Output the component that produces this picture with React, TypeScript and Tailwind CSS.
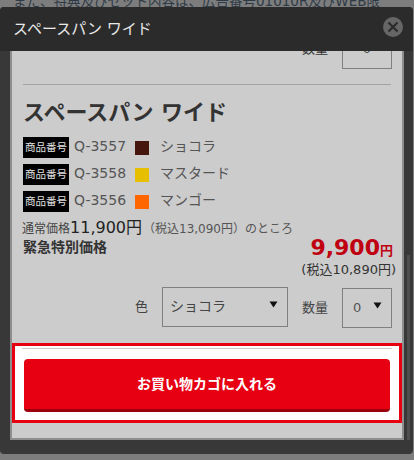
import React from 'react';

const font = { fontFamily: '"DejaVu Sans", "Noto Sans CJK JP", sans-serif' };

const items = [
  { code: 'Q-3557', color: 'bg-[#45150e]', name: 'ショコラ' },
  { code: 'Q-3558', color: 'bg-[#e6bf00]', name: 'マスタード' },
  { code: 'Q-3556', color: 'bg-[#ff6600]', name: 'マンゴー' },
];

const Arrow = () => (
  <svg width="9" height="7" viewBox="0 0 9 7" className="block">
    <path d="M0.5 0.5h8L4.5 6.5z" fill="#111" />
  </svg>
);

export default function App() {
  return (
    <div style={font} className="relative h-[460px] w-[414px] overflow-hidden bg-[#7d7d7d]">
      <p className="h-[7px] overflow-hidden whitespace-nowrap pl-[13px] text-[13.5px] leading-[3px] text-[#2d3a45]">
        また、特典及びセット内容は、広告番号01010R及びWEB限
      </p>

      {/* modal */}
      <div className="absolute left-0 top-[7px] flex h-[447px] w-[413px] flex-col rounded-[4px] bg-[#383838]">
        <div className="relative z-10 flex h-[44px] shrink-0 items-center justify-between rounded-t-[4px] bg-[#2b2b2b] pl-[13px] pr-[10px]">
          <h2 className="text-[15px] font-normal text-[#e8e8e8]">スペースパン ワイド</h2>
          <svg width="20" height="20" viewBox="0 0 20 20" className="mb-[4px]">
            <circle cx="10" cy="10" r="10" fill="#666" />
            <path d="M5.5 5.5l9 9M14.5 5.5l-9 9" stroke="#2b2b2b" strokeWidth="2.2" />
          </svg>
        </div>

        <div className="relative flex-1 overflow-hidden">
          <div className="absolute right-[3px] top-[204px] h-[185px] w-[3px] bg-[#4e4e4e]" />
          <div className="ml-[10px] mt-[-24px] h-[413px] w-[394px] border-2 border-[#8e8e8e] bg-[#cccccc]">
            <div className="flex justify-end pr-[10px]">
              <span className="mr-[14px] mt-[10px] text-[13px] leading-[20px] text-[#333]">数量</span>
              <div className="flex h-[40px] w-[50px] justify-center border border-[#808080] pt-[9px] text-[13px] leading-[20px] text-[#444]">0</div>
            </div>

            <div className="mx-[11px] mt-[15px] border-t border-[#a3a3a3]" />

            <h1 className="ml-[11px] mt-[11px] text-[22px] font-bold leading-[34px] text-[#333]">スペースパン ワイド</h1>

            <div className="ml-[11px] mt-[7px] flex flex-col gap-[6px]">
              {items.map((item) => (
                <div key={item.code} className="flex h-[21px] items-center">
                  <span className="flex h-[21px] w-[46px] items-center justify-center bg-black text-[10.5px] text-[#e0e0e0]">商品番号</span>
                  <span className="mb-[3px] ml-[5px] w-[61px] text-[14px] text-[#555]">{item.code}</span>
                  <span className={`h-[14px] w-[14px] ${item.color}`} />
                  <span className="mb-[3px] ml-[11px] text-[14px] text-[#555]">{item.name}</span>
                </div>
              ))}
            </div>

            <p className="ml-[10px] mt-[4px] flex h-[24px] items-baseline leading-[24px] text-[#444]">
              <span className="text-[12px]">通常価格</span>
              <span className="text-[16px] text-[#222]">11,900円</span>
              <span className="ml-[1px] text-[12px] text-[#555]">（税込13,090円）のところ</span>
            </p>

            <div className="mt-[-3px] flex h-[27px] justify-between pl-[11px] pr-[9px]">
              <span className="h-[20px] text-[14px] font-bold leading-[20px] text-[#333]">緊急特別価格</span>
              <span className="mt-[-5px] h-[32px] text-[22px] font-bold leading-[32px] text-[#c00010]">
                9,900<span className="text-[13px]">円</span>
              </span>
            </div>
            <p className="mt-[-4px] h-[20px] pr-[6px] text-right text-[13px] leading-[20px] text-[#333]">(税込10,890円)</p>

            <div className="mt-[7px] flex h-[41px] items-start justify-end pr-[10px]">
              <span className="mr-[14px] text-[13px] leading-[40px] text-[#444]">色</span>
              <div className="flex h-[40px] w-[126px] items-start justify-between border border-[#808080] pl-[7px] pr-[9px] leading-[36px]">
                <span className="text-[14px] text-[#444]">ショコラ</span>
                <span className="mt-[13px]"><Arrow /></span>
              </div>
              <span className="ml-[14px] mr-[14px] text-[13px] leading-[42px] text-[#444]">数量</span>
              <div className="mt-[1px] flex h-[40px] w-[50px] items-start justify-between border border-[#808080] pl-[10px] pr-[9px] leading-[38px]">
                <span className="text-[13px] text-[#555]">0</span>
                <span className="mt-[13px]"><Arrow /></span>
              </div>
            </div>

            <div className="mt-[15px] h-[80px] border-[3px] border-[#e60012] bg-white px-[7px] pt-[2px]">
              <div className="border-t border-[#c8c8c8]" />
              <button className="ml-[2px] mt-[10px] flex h-[53px] w-[366px] items-center justify-center rounded-[4px] border-b-[3px] border-[#9c000c] bg-[#e60012] text-[14px] font-bold text-white">
                お買い物カゴに入れる
              </button>
            </div>
          </div>
        </div>
      </div>
    </div>
  );
}
